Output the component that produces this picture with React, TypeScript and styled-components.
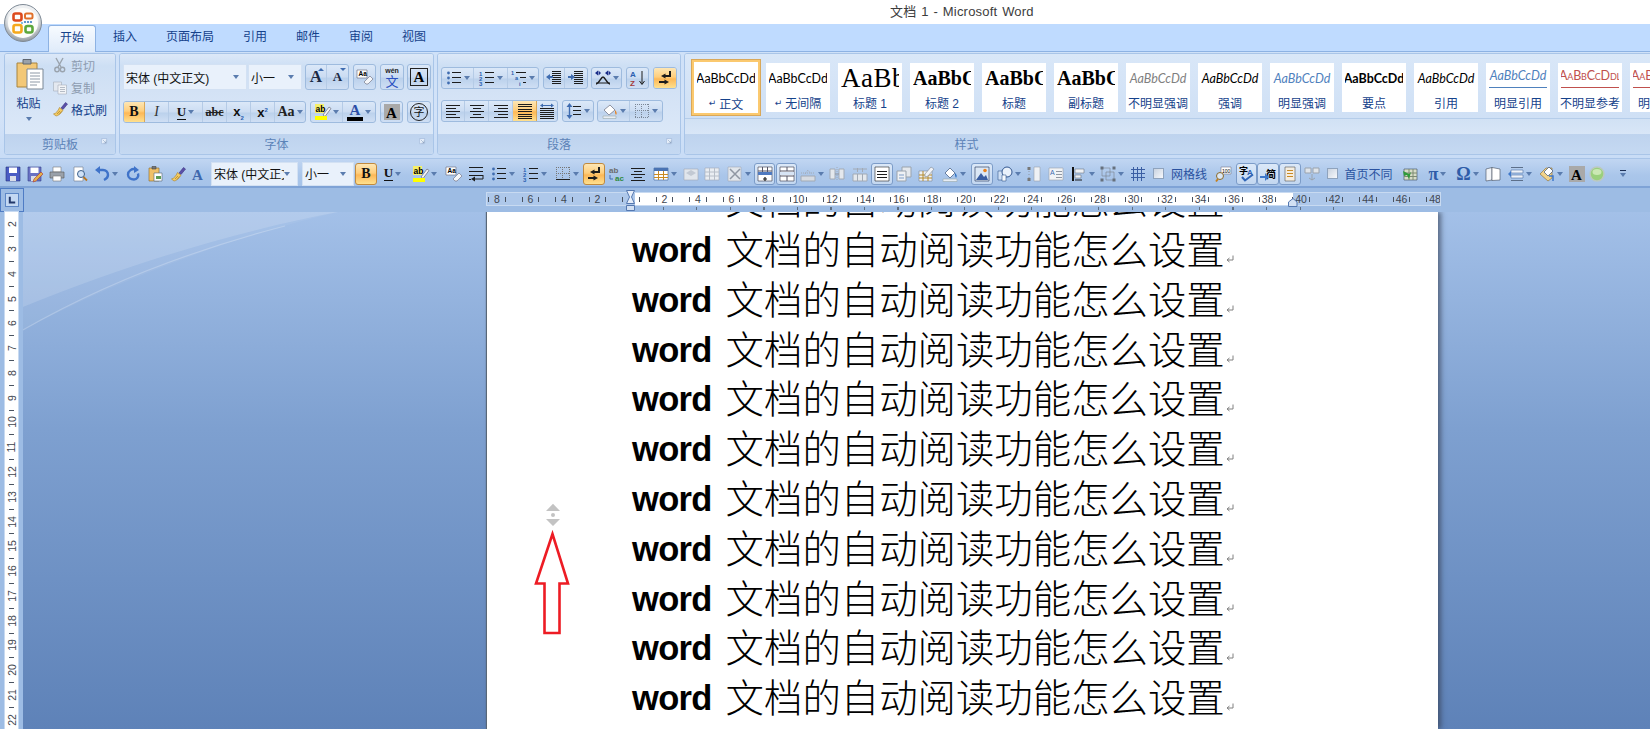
import React from "react";
import styled, { createGlobalStyle } from "styled-components";

const UI = `"Liberation Sans", "Noto Sans CJK SC", sans-serif`;
const SERIF = `"Liberation Serif", "Noto Sans CJK SC", serif`;

const Global = createGlobalStyle`
  html, body { margin: 0; padding: 0; background: #fff; overflow: hidden; }
  body { font-family: ${UI}; font-size: 12px; }
  * { box-sizing: border-box; }
`;

const S = (p: { d: string; c?: string; w?: number }) => (
  <path d={p.d} fill="none" stroke={p.c || "#1c1c1c"} strokeWidth={p.w || 1} />
);
const F = (p: { d: string; c: string; s?: string }) => (
  <path d={p.d} fill={p.c} stroke={p.s || "none"} strokeWidth={0.6} />
);
const T = (p: { x: number; y: number; z: number; c?: string; b?: boolean; i?: boolean; serif?: boolean; children: React.ReactNode }) => (
  <text x={p.x} y={p.y} fontSize={p.z} fill={p.c || "#000"} fontWeight={p.b ? 700 : 400} fontStyle={p.i ? "italic" : "normal"} fontFamily={p.serif ? SERIF : UI}>
    {p.children}
  </text>
);
const lines = (ys: number[], x1: number, x2: number, c = "#1c1c1c") => <S d={ys.map((y) => `M${x1} ${y + 0.5}H${x2}`).join("")} c={c} />;

const G: Record<string, React.ReactNode> = {
  cut: (<><S d="M4 1l5 9M11 1L6 10" c="#9aa3ad" w={1.4} /><circle cx="5" cy="12.5" r="2.2" fill="none" stroke="#9aa3ad" strokeWidth="1.4" /><circle cx="10.5" cy="12.5" r="2.2" fill="none" stroke="#9aa3ad" strokeWidth="1.4" /></>),
  copy: (<><F d="M1.5 3h8v9h-8z" c="#e4e9f0" s="#a5adb8" /><F d="M6 6h8.5v9H6z" c="#f2f4f7" s="#a5adb8" />{lines([8, 10, 12], 8, 13, "#b5bcc6")}</>),
  brush: (<><F d="M9 7l4.5-5.5 2 1.6L11 8.5z" c="#5a4fa8" s="#3c3480" /><F d="M1.5 13C4 12.5 6 10 7.5 6.5l3.5 2.8C9 12.5 6 15 4 15z" c="#f3ca62" s="#a9812a" /><S d="M5 13l3-3M7 13.5l2.5-3" c="#a9812a" w={0.7} /></>),
  bullets: (<><circle cx="2.5" cy="3" r="1.4" fill="#3f6cb0" /><circle cx="2.5" cy="8" r="1.4" fill="#3f6cb0" /><circle cx="2.5" cy="13" r="1.4" fill="#3f6cb0" />{lines([2, 7, 12], 6, 15)}</>),
  numbers: (<><T x={0} y={5.5} z={6} c="#2a5fb0" b>1</T><T x={0} y={10.5} z={6} c="#2a5fb0" b>2</T><T x={0} y={15.5} z={6} c="#2a5fb0" b>3</T>{lines([2, 7, 12], 6, 15)}</>),
  multi: (<><T x={0} y={5} z={5.5} c="#2a5fb0" b>1</T><T x={4} y={10} z={5.5} c="#2a5fb0" b>a</T><T x={8} y={15.5} z={5.5} c="#2a5fb0" b>i</T>{lines([2], 5, 15)}{lines([7], 9, 15)}{lines([12], 12, 15)}</>),
  indentL: (<>{lines([1, 3, 5, 7, 9, 11, 13], 6, 15)}<F d="M0 7l4-3v2h3v2H4v2z" c="#3f6cb0" /></>),
  indentR: (<>{lines([1, 3, 5, 7, 9, 11, 13], 6, 15)}<F d="M7 7L3 4v2H0v2h3v2z" c="#3f6cb0" /></>),
  asian: (<><S d="M1 14c3 0 5-7 7-7s4 7 7 7" w={1.4} /><S d="M1 13h14" /><F d="M0 3l3-2.500v5zM6 3L3.500.5v5z" c="#1b2e8a" /><F d="M10 3l3-2.500v5zM16 3l-2.500-2.500v5z" c="#1b2e8a" /></>),
  sort: (<><T x={0} y={7} z={8} c="#2a5fb0" b>A</T><T x={0} y={15.500} z={8} c="#a33a3a" b>Z</T><S d="M12 1v13M9.500 11l2.500 3.500 2.500-3.500" /></>),
  marks: (<><S d="M13 1v5H7" w={2} /><F d="M8.500 3.500L4 6l4.500 2.500z" c="#1c1c1c" /><S d="M2 12h6" w={2} /><F d="M7.500 9.500L12 12l-4.500 2.500z" c="#1c1c1c" /></>),
  alignL: (<>{lines([2, 8, 14], 1, 15)}{lines([5, 11], 1, 11)}</>),
  alignC: (<>{lines([2, 8, 14], 1, 15)}{lines([5, 11], 4, 12)}</>),
  alignR: (<>{lines([2, 8, 14], 1, 15)}{lines([5, 11], 5, 15)}</>),
  justify: (<>{lines([1, 3, 6, 8, 11, 13], 1, 15)}<S d="M1 15.500h14" /></>),
  distrib: (<>{lines([5, 7, 9, 11, 13, 15], 1, 15)}<S d="M4 2.500h8" c="#3f6cb0" /><F d="M1 2.500L4 .5v4zM15 2.500L12 .5v4z" c="#3f6cb0" /></>),
  spacing: (<>{lines([3, 7, 11], 7, 15)}<S d="M3.500 2v12" c="#3f6cb0" w={1.4} /><F d="M3.500 0l3 4h-6zM3.500 16l3-4h-6z" c="#3f6cb0" /></>),
  bucket: (<><F d="M2 7l6-5 5 5-6 5z" c="#fff" s="#556" /><F d="M13 7c2 2 2 4 1 5-1-1-1-3-1-5z" c="#e8821f" /><F d="M1 13h13v2.500H1z" c="#e8edf4" s="#9aa" /></>),
  borderDots: (<><path d="M1 1.500h14M1 7.500h14M1.500 1v11M7.500 1v11M14.500 1v11" stroke="#777" strokeDasharray="1 1" fill="none" /><S d="M1 13.500h14" c="#222" /></>),
  borderGrey: (<path d="M1 1.500h14M1 7.500h14M1 14.500h14M1.500 1v14M7.500 1v14M14.500 1v14" stroke="#7a8696" strokeDasharray="1 1" fill="none" />),
  launcher: (<><F d="M1 1h8v8H1z" c="#eaf2fc" s="#7e9cc6" /><F d="M3 3l5 5M8 4v4H4" c="none" s="#54739f" /></>),
  save: (<><F d="M1 1h14v14H1z" c="#4a5cc4" s="#27337a" /><F d="M4 1.500h8V7H4z" c="#fff" /><F d="M5 10h6v5H5z" c="#d9dde8" /></>),
  saveAs: (<><F d="M1 1h13v14H1z" c="#6a72c4" s="#33408a" /><F d="M3.500 1.500h8V7h-8z" c="#fff" /><F d="M4 10h6v5H4z" c="#d9dde8" /><F d="M7 13l7-7 2 2-7 7-3 1z" c="#e3b04b" s="#a33" /></>),
  print: (<><F d="M4 1h8v5H4z" c="#fff" s="#777" /><F d="M1 6h14v6H1z" c="#9aa1aa" s="#555" /><F d="M4 10h8v5H4z" c="#fff" s="#777" /></>),
  preview: (<><F d="M2 1h9v14H2z" c="#fff" s="#6f7b8a" /><circle cx="9" cy="8" r="3.500" fill="#cfe1f6" stroke="#3c5f8a" /><S d="M11.500 11l3.500 3.500" c="#b9761f" w={1.8} /></>),
  undo: (<><S d="M4 4h5c3 0 5 2 5 5s-2 4-4 5" c="#3f73c9" w={2.4} /><F d="M6 0v8L1 4z" c="#3f73c9" /></>),
  redo: (<><S d="M11 3.500C7 2 3 5 3 8.500s3 5 6 5 5-3 4-6" c="#3f73c9" w={2.4} /><F d="M9 0v7l5-3z" c="#3f73c9" /></>),
  paste: (<><F d="M2 2h10v13H2z" c="#f0c069" s="#8a6a2a" /><F d="M5 0.500h4V3H5z" c="#777" s="#444" /><F d="M7 7h8v8H7z" c="#fff" s="#567" /><F d="M9 10h5v3H9z" c="#5d9a53" /></>),
  fontA: <T x={2} y={14} z={15} c="#3d67ad" b serif>A</T>,
  clear: (<><F d="M0 1h10v8H0z" c="#fff" s="#667" /><T x={1.500} y={7} z={6.500} b>Aa</T><F d="M7 13l6-6 3 3-5 5H9z" c="#f4f6f9" s="#667" /></>),
  wrapL: (<>{lines([1, 5, 9], 1, 15)}<S d="M15 9v4H6" /><F d="M7 10.500L3 13l4 2.500z" c="#1c1c1c" />{lines([13], 1, 3)}</>),
  swap: (<><T x={1} y={7} z={8} c="#6b6b6b" b>ab</T><T x={7} y={15} z={8} c="#2f8a3d" b>ac</T><S d="M2 9v4h3" c="#3f6cb0" /></>),
  tableC: (<><F d="M1 2h14v12H1z" c="#fff" s="#3a5f94" /><F d="M1 2h14v3H1z" c="#4a73b3" /><path d="M1 8.500h14M1 11.500h14M5.500 5v9M10.500 5v9" stroke="#c98a24" /></>),
  greyA: (<><F d="M1 3h14v11H1z" c="#e1e6ec" s="#a2aab5" /><path d="M3 7l5-3 5 3-5 3z" fill="#c2c9d3" /></>),
  greyT: (<><F d="M1 2h14v12H1z" c="#e9edf2" s="#a2aab5" /><path d="M1 6h14M1 10h14M5.500 2v12M10.500 2v12" stroke="#b7bec8" /></>),
  greyX: (<><F d="M1 1h13v14H1z" c="#e1e6ec" s="#a2aab5" /><S d="M3 3l10 10M13 3L3 13" c="#8f97a3" w={1.5} /></>),
  insRow: (<><F d="M1 1h14v14H1z" c="#fff" s="#334" /><path d="M1 5h14M5.500 1v8M10.500 1v8" stroke="#556" /><F d="M1 6h14v3H1z" c="#4f7ac0" /><S d="M8 11v4M6 13h4" w={1.2} /></>),
  splitT: (<><F d="M1 1h14v14H1z" c="#fff" s="#334" /><path d="M1 5h14M1 10h14M8 1v4M8 10v5" stroke="#556" /><F d="M1 6h14v3H1z" c="#d7e4f5" /></>),
  greyS: (<><path d="M1 10h14v5H1z" fill="#d6dbe2" stroke="#a2aab5" /><path d="M5 8l3-4 3 4M1 7h14" stroke="#a2aab5" fill="none" strokeDasharray="1 1" /></>),
  greyM: (<><path d="M1 3h5v10H1zM10 3h5v10h-5z" fill="#e4e8ed" stroke="#a2aab5" /><path d="M6 8h4" stroke="#8f97a3" /><path d="M8 1v14" stroke="#a2aab5" strokeDasharray="1 1" /></>),
  greyD: (<><path d="M1 8h14v7H1z" fill="#e4e8ed" stroke="#a2aab5" /><path d="M1 3h14M5.500 2v4M10.500 2v4M5.500 8v7M10.500 8v7" stroke="#a2aab5" /></>),
  textDir: (<><F d="M1 1h14v14H1z" c="#fff" s="#222" />{lines([5, 8, 11], 3, 13)}</>),
  greyC: (<><path d="M6 1h9v10H6z" fill="#e4e8ed" stroke="#9aa3ad" /><path d="M1 5h9v10H1z" fill="#eef1f5" stroke="#9aa3ad" /><path d="M3 9h5M3 12h5" stroke="#7f9dc7" /></>),
  editT: (<><F d="M1 5h13v10H1z" c="#eef1f5" s="#7d8794" /><path d="M1 9h13M1 12h13M5 5v10M10 5v10" stroke="#b48a2a" /><F d="M7 8l6-7 3 2-6 7-3 1z" c="#f1f3f6" s="#7d8794" /></>),
  fill: (<><F d="M3 7l5-5 5 5-5 5z" c="#fff" s="#1f3a66" /><F d="M13 7c2 2 2 3 1 5-1-2-1-3-1-5z" c="#2a6ec0" /><F d="M1 13h14v2.500H1z" c="#e8edf4" s="#9aa" /></>),
  pic: (<><F d="M1 1h14v14H1z" c="#dbe7f5" s="#1c2b52" /><path d="M2 14l5-7 3 4 2-2 2 5z" fill="#3a5ea3" /><circle cx="11" cy="4.500" r="1.800" fill="#e8821f" /></>),
  shapes: (<><F d="M1 5h7v9H1z" c="#cfe0f5" s="#33578f" /><circle cx="10" cy="6" r="5" fill="#e9f1fb" stroke="#33578f" /><F d="M5 9h4v6H5z" c="#f6f9fd" s="#33578f" /></>),
  handles: (<><path d="M3 2v12" stroke="#8f97a3" strokeDasharray="1 2" /><F d="M8 1h6v14H8z" c="#eef1f5" s="#9aa3ad" /><F d="M1.500 1h3v3h-3zM1.500 12h3v3h-3z" c="#777" /></>),
  textBox: (<><F d="M1 2h14v12H1z" c="#f1f3f6" s="#9aa3ad" /><T x={2} y={9} z={7} c="#3f6cb0">A</T>{lines([5, 8, 11], 8, 14, "#8f97a3")}</>),
  alignO: (<><path d="M2 1v14" stroke="#111" strokeWidth="2" /><F d="M4 3h9v4H4zM4 9h6v3H4z" c="#eef1f5" s="#6c7785" /><S d="M4 14h7" /></>),
  group: (<><F d="M2 2h8v8H2zM6 6h8v8H6z" c="none" s="#78808c" /><F d="M0.500.5h3v3h-3zM12.500.5h3v3h-3zM0.500 12.500h3v3h-3zM12.500 12.500h3v3h-3z" c="#66707d" /></>),
  grid: <path d="M3.500 1v14M7.500 1v14M11.500 1v14M1 3.500h14M1 7.500h14M1 11.500h14" stroke="#3a5ea3" fill="none" />,
  zoomT: (<><F d="M6 1h10v7H6z" c="#fff" s="#778" /><T x={7} y={6.500} z={5}>100</T><circle cx="5" cy="10" r="3.500" fill="#dbe7f5" stroke="#8a6a2a" /><S d="M3 13l-2 2.500" c="#c6801d" w={2} /></>),
  spell: (<><T x={0} y={8} z={9} b>字</T><T x={8} y={9} z={8} c="#2a5fb0" b>A</T><S d="M3 11l3 3.500 8-6" c="#2f65b7" w={2} /></>),
  trans: (<><T x={6} y={12} z={10} b>简</T><F d="M0 10h5V7l4 4-4 4v-3H0z" c="#3f78c9" /></>),
  pageV: (<><F d="M3 1h10v14H3z" c="#f4ede0" s="#555" />{lines([4, 7, 10], 5, 11, "#c98a24")}</>),
  blocks: (<><path d="M1 2h6v5H1zM9 2h6v5H9z" fill="#dfe4ea" stroke="#9aa3ad" /><path d="M8 8v6M5 12l3 2 3-2" stroke="#9aa3ad" fill="none" /></>),
  excel: (<><F d="M2 3h13v11H2z" c="#d7ddc7" s="#3b4a5c" /><path d="M2 7h13M2 10.500h13M7 3v11M11 3v11" stroke="#7d8a73" /><F d="M1 5l6 3 2-2-2 7-2-4-3 1z" c="#2f9a3a" /></>),
  book: (<><F d="M1 3l6-1.500V14l-6 1z" c="#f1f4f8" s="#40495a" /><F d="M7 1.500l8 1.500v11l-8 .5z" c="#fff" s="#40495a" /></>),
  header: (<><path d="M3 1.500h12M3 14.500h12" stroke="#5c6f8a" /><F d="M3 4h12v3H3zM3 9h12v3H3z" c="#eef3fa" s="#4a6ea5" /><F d="M0 8l3-3v6z" c="#3f78c9" /></>),
  tag: (<><F d="M1 8l6-6h6v10l-4 3z" c="#f2d38a" s="#8a6a2a" /><F d="M5 6l5-5 4 4-5 5z" c="#fff" s="#1f3a66" /><S d="M10 10h4v5" c="#3f78c9" w={1.5} /></>),
  shadeA: (<><path d="M0 0h16v16H0z" fill="#a9a9a9" /><T x={2} y={13.500} z={15} b serif>A</T></>),
  orb: (<><circle cx="8" cy="8" r="7" fill="#9ad07c" stroke="#bcc9c0" strokeWidth="1.500" /><ellipse cx="8" cy="6" rx="4.500" ry="3" fill="#cbe8b4" /></>),
};

const Icon = ({ n, s = 16 }: { n: string; s?: number }) => (
  <IconSvg width={s} height={s} viewBox="0 0 16 16">
    {G[n]}
  </IconSvg>
);

const Ret = () => (
  <RetSvg width="8" height="8" viewBox="0 0 8 8">
    <path d="M7 .5v4.500H1.500M3.500 3L1 5l2.500 2" fill="none" stroke="#808080" strokeWidth="1" />
  </RetSvg>
);

const TABS = ["开始", "插入", "页面布局", "引用", "邮件", "审阅", "视图"];

const STYLES: { label: string; pre?: string; preview: string; kind: string }[] = [
  { label: "正文", pre: "↵", preview: "AaBbCcDd", kind: "plain" },
  { label: "无间隔", pre: "↵", preview: "AaBbCcDd", kind: "plain" },
  { label: "标题 1", preview: "AaBb", kind: "h1" },
  { label: "标题 2", preview: "AaBbC", kind: "h2" },
  { label: "标题", preview: "AaBbC", kind: "h2" },
  { label: "副标题", preview: "AaBbC", kind: "h2" },
  { label: "不明显强调", preview: "AaBbCcDd", kind: "faint" },
  { label: "强调", preview: "AaBbCcDd", kind: "em" },
  { label: "明显强调", preview: "AaBbCcDd", kind: "blueEm" },
  { label: "要点", preview: "AaBbCcDd", kind: "bold" },
  { label: "引用", preview: "AaBbCcDd", kind: "em" },
  { label: "明显引用", preview: "AaBbCcDd", kind: "quote" },
  { label: "不明显参考", preview: "AaBbCcDdl", kind: "ref" },
  { label: "明显参考", preview: "AaBbCcDdl", kind: "ref" },
];

type Q = { w: number; n?: string; caret?: boolean; on?: boolean; box?: boolean; ml?: number; text?: string; check?: boolean; letter?: string };

const QAT: Q[] = [
  { w: 22, n: "save" }, { w: 22, n: "saveAs" }, { w: 22, n: "print" }, { w: 23, n: "preview" },
  { w: 29, n: "undo", caret: true }, { w: 25, n: "redo" }, { w: 20, n: "paste" }, { w: 25, n: "brush" }, { w: 16, n: "fontA" },
];
const QAT2: Q[] = [
  { w: 22, letter: "B", on: true, box: true }, { w: 31, letter: "U", caret: true }, { w: 33, n: "hl", caret: true },
  { w: 26, n: "clear" }, { w: 18, n: "wrapL" }, { w: 35, n: "bullets", caret: true }, { w: 30, n: "numbers", caret: true },
  { w: 33, n: "borderDots", caret: true }, { w: 22, n: "marks", on: true, box: true }, { w: 22, n: "swap" }, { w: 22, n: "alignC" },
  { w: 31, n: "tableC", caret: true }, { w: 21, n: "greyA" }, { w: 22, n: "greyT" }, { w: 31, n: "greyX", caret: true },
  { w: 21, n: "insRow", box: true }, { w: 21, ml: 1, n: "splitT", box: true }, { w: 29, n: "greyS", caret: true },
  { w: 22, n: "greyM" }, { w: 23, n: "greyD" }, { w: 22, n: "textDir", box: true }, { w: 22, n: "greyC" }, { w: 21, n: "editT" },
  { w: 35, n: "fill", caret: true }, { w: 22, n: "pic", box: true }, { w: 32, n: "shapes", caret: true }, { w: 17, n: "handles" },
  { w: 28, n: "textBox" }, { w: 25, n: "alignO", caret: true }, { w: 33, n: "group", caret: true }, { w: 20, n: "grid" },
  { w: 21, check: true }, { w: 40, text: "网格线" }, { w: 27, n: "zoomT" }, { w: 21, n: "spell", box: true }, { w: 22, n: "trans", box: true },
  { w: 22, n: "pageV", box: true }, { w: 22, n: "blocks" }, { w: 18, check: true }, { w: 55, text: "首页不同" }, { w: 28, n: "excel" },
  { w: 27, letter: "π", caret: true }, { w: 33, letter: "Ω", caret: true }, { w: 18, n: "book" }, { w: 35, n: "header", caret: true },
  { w: 27, n: "tag", caret: true }, { w: 26, n: "shadeA" }, { w: 14, n: "orb" },
];

const HL = () => (
  <IconSvg width="16" height="16" viewBox="0 0 16 16">
    <path d="M0 0h9v9H0z" fill="#f5ef6a" />
    <T x={0.5} y={8} z={8.5} b>ab</T>
    <path d="M8 11l6-8 2 1.500-6 8z" fill="#f1f3f6" stroke="#556" strokeWidth="0.6" />
    <path d="M0 12h12v4H0z" fill="#ff0" />
  </IconSvg>
);

const renderQ = (q: Q, i: number) => (
  <QCell key={i} $w={q.w} $ml={q.ml || 0} $on={!!q.on} $box={!!q.box}>
    {q.n === "hl" ? <HL /> : q.n ? <Icon n={q.n} /> : null}
    {q.letter === "B" && <BoldB>B</BoldB>}
    {q.letter === "U" && <UnderU>U</UnderU>}
    {(q.letter === "π" || q.letter === "Ω") && <MathGlyph>{q.letter}</MathGlyph>}
    {q.text && <QText>{q.text}</QText>}
    {q.check && <Check />}
    {q.caret && <Caret />}
  </QCell>
);

const rulerNums = [8, 6, 4, 2, 0, 2, 4, 6, 8, 10, 12, 14, 16, 18, 20, 22, 24, 26, 28, 30, 32, 34, 36, 38, 40, 42, 44, 46, 48];
const vNums = Array.from({ length: 21 }, (_, i) => i + 2);

const App = () => (
  <Root>
    <Global />
    <Orb>
      <svg width="38" height="38" viewBox="0 0 38 38">
        <defs>
          <radialGradient id="rim" cx="50%" cy="35%" r="65%">
            <stop offset="0.6" stopColor="#eef0f2" />
            <stop offset="1" stopColor="#8c949c" />
          </radialGradient>
        </defs>
        <circle cx="19" cy="19" r="18.500" fill="url(#rim)" stroke="#7f8a96" />
        <circle cx="19" cy="19" r="15" fill="#fdfdfb" />
        <rect x="9.500" y="9.500" width="8" height="7" rx="2" fill="none" stroke="#dd4a1c" strokeWidth="2.600" />
        <rect x="9.500" y="21" width="8" height="7.500" rx="2" fill="none" stroke="#f5a81c" strokeWidth="2.600" />
        <rect x="21" y="9.500" width="7.500" height="5" rx="1.500" fill="none" stroke="#e0702a" strokeWidth="2" />
        <rect x="21.500" y="22" width="7" height="6.500" rx="2" fill="none" stroke="#5ca83c" strokeWidth="2.600" />
        <circle cx="21" cy="18" r="1.100" fill="#3a7ec2" />
        <circle cx="24" cy="18" r="1.100" fill="#3a7ec2" />
        <circle cx="27" cy="18" r="1.100" fill="#3a7ec2" />
        <circle cx="18" cy="19" r="1.100" fill="#6cb0d8" />
      </svg>
    </Orb>

    <TitleBar>文档 1 - Microsoft Word</TitleBar>

    <TabStrip>
      {TABS.map((t, i) => (
        <Tab key={t} $on={i === 0}>
          {t}
        </Tab>
      ))}
    </TabStrip>

    <Ribbon>
      <Group $w={112}>
        <GroupBody $pl={0}>
          <ClipCol>
            <PasteBig>
              <svg width="28" height="32" viewBox="0 0 28 32">
                <path d="M1 5h20v24H1z" fill="#f3c877" stroke="#a8843f" />
                <path d="M7 1.500h8V6H7z" fill="#9aa1aa" stroke="#5f6670" />
                <path d="M11 11h16v20H11z" fill="#fff" stroke="#7b8795" />
                <path d="M14 15h10M14 18h10M14 21h10M14 24h10M14 27h7" stroke="#8e99a6" />
              </svg>
            </PasteBig>
            <PasteLabel>粘贴</PasteLabel>
            <Caret />
          </ClipCol>
          <ClipRows>
            <ClipRow $dim>
              <Icon n="cut" />
              剪切
            </ClipRow>
            <ClipRow $dim>
              <Icon n="copy" />
              复制
            </ClipRow>
            <ClipRow>
              <Icon n="brush" />
              格式刷
            </ClipRow>
          </ClipRows>
        </GroupBody>
        <GroupLabel>
          剪贴板
          <Launcher>
            <Icon n="launcher" s={10} />
          </Launcher>
        </GroupLabel>
      </Group>

      <Group $w={315}>
        <GroupBody $pl={3} $col>
          <Row $h={26} $top={10}>
            <Combo $w={124}>
              宋体 (中文正文)
              <Caret />
            </Combo>
            <Combo $w={54} $ml={1}>
              小一
              <Caret />
            </Combo>
            <BtnGroup $ml={3}>
              <Btn $w={21}>
                <GrowA $z={17}>A</GrowA>
                <Up />
              </Btn>
              <Btn $w={21}>
                <GrowA $z={13}>A</GrowA>
                <Down />
              </Btn>
            </BtnGroup>
            <BtnGroup $ml={4}>
              <Btn $w={21}>
                <Icon n="clear" />
              </Btn>
            </BtnGroup>
            <BtnGroup $ml={4}>
              <Btn $w={22}>
                <WenBox>
                  <small>wén</small>
                  <b>文</b>
                </WenBox>
              </Btn>
            </BtnGroup>
            <BtnGroup $ml={3}>
              <Btn $w={22}>
                <FramedA>A</FramedA>
              </Btn>
            </BtnGroup>
          </Row>
          <Row $h={22} $top={11}>
            <BtnGroup>
              <Btn $w={21} $on>
                <BoldB>B</BoldB>
              </Btn>
              <Btn $w={24}>
                <ItalicI>I</ItalicI>
              </Btn>
              <Btn $w={34}>
                <UnderU>U</UnderU>
                <Caret />
              </Btn>
              <Btn $w={24}>
                <StrikeAbc>abc</StrikeAbc>
              </Btn>
              <Btn $w={24}>
                <ScriptX>
                  x<sub>2</sub>
                </ScriptX>
              </Btn>
              <Btn $w={24}>
                <ScriptX>
                  x<sup>2</sup>
                </ScriptX>
              </Btn>
              <Btn $w={30}>
                <CaseAa>Aa</CaseAa>
                <Caret />
              </Btn>
            </BtnGroup>
            <BtnGroup $ml={4}>
              <Btn $w={32}>
                <HL />
                <Caret />
              </Btn>
              <Btn $w={32}>
                <ColorA>A</ColorA>
                <Caret />
              </Btn>
            </BtnGroup>
            <BtnGroup $ml={4}>
              <Btn $w={21}>
                <Icon n="shadeA" />
              </Btn>
            </BtnGroup>
            <BtnGroup $ml={4}>
              <Btn $w={22}>
                <CircleZi>字</CircleZi>
              </Btn>
            </BtnGroup>
          </Row>
        </GroupBody>
        <GroupLabel>
          字体
          <Launcher>
            <Icon n="launcher" s={10} />
          </Launcher>
        </GroupLabel>
      </Group>

      <Group $w={244}>
        <GroupBody $pl={3} $col>
          <Row $h={22} $top={13}>
            <BtnGroup>
              <Btn $w={32}>
                <Icon n="bullets" />
                <Caret />
              </Btn>
              <Btn $w={34}>
                <Icon n="numbers" />
                <Caret />
              </Btn>
              <Btn $w={30}>
                <Icon n="multi" />
                <Caret />
              </Btn>
            </BtnGroup>
            <BtnGroup $ml={4}>
              <Btn $w={21}>
                <Icon n="indentL" />
              </Btn>
              <Btn $w={22}>
                <Icon n="indentR" />
              </Btn>
            </BtnGroup>
            <BtnGroup $ml={3}>
              <Btn $w={29}>
                <Icon n="asian" />
                <Caret />
              </Btn>
            </BtnGroup>
            <BtnGroup $ml={4}>
              <Btn $w={21}>
                <Icon n="sort" />
              </Btn>
            </BtnGroup>
            <BtnGroup $ml={4}>
              <Btn $w={22} $on>
                <Icon n="marks" />
              </Btn>
            </BtnGroup>
          </Row>
          <Row $h={22} $top={11}>
            <BtnGroup>
              <Btn $w={23}>
                <Icon n="alignL" />
              </Btn>
              <Btn $w={24}>
                <Icon n="alignC" />
              </Btn>
              <Btn $w={24}>
                <Icon n="alignR" />
              </Btn>
              <Btn $w={24} $on>
                <Icon n="justify" />
              </Btn>
              <Btn $w={20}>
                <Icon n="distrib" />
              </Btn>
            </BtnGroup>
            <BtnGroup $ml={4}>
              <Btn $w={30}>
                <Icon n="spacing" />
                <Caret />
              </Btn>
            </BtnGroup>
            <BtnGroup $ml={3}>
              <Btn $w={32}>
                <Icon n="bucket" />
                <Caret />
              </Btn>
              <Btn $w={32}>
                <Icon n="borderGrey" />
                <Caret />
              </Btn>
            </BtnGroup>
          </Row>
        </GroupBody>
        <GroupLabel>
          段落
          <Launcher>
            <Icon n="launcher" s={10} />
          </Launcher>
        </GroupLabel>
      </Group>

      <Group $w={1100}>
        <GalleryBand>
          {STYLES.map((s, i) => (
            <StyleItem key={s.label} $on={i === 0}>
              <Preview $kind={s.kind}>{s.preview}</Preview>
              <StyleName>
                {s.pre && <PreMark>{s.pre}</PreMark>}
                {s.label}
              </StyleName>
            </StyleItem>
          ))}
        </GalleryBand>
        <GalleryFoot />
        <GroupLabel $pr={535}>样式</GroupLabel>
      </Group>
    </Ribbon>

    <Qat>
      {QAT.map(renderQ)}
      <Combo $w={87} $ml={5} $h={24}>
        <ClipText>宋体 (中文正文)</ClipText>
        <Caret />
      </Combo>
      <Combo $w={52} $ml={4} $h={24}>
        小一
        <Caret />
      </Combo>
      <QGap />
      {QAT2.map(renderQ)}
      <Overflow>
        <i />
        <Caret />
      </Overflow>
    </Qat>

    <RulerBand>
      <Corner>
        <CornerInner>
          <svg width="10" height="10" viewBox="0 0 10 10">
            <path d="M1 1h2.500v6H9v2.500H1z" fill="#22386b" />
          </svg>
        </CornerInner>
      </Corner>
      <RulerWrap>
        <RulerTrack>
          <RulerCells>
            {rulerNums.map((n, i) => (
              <RulerCell key={i}>
                <RTick />
                <RNum>{n === 0 ? "" : n}</RNum>
                <RTick />
              </RulerCell>
            ))}
          </RulerCells>
          <Hourglass>
            <svg width="10" height="22" viewBox="0 0 10 22">
              <path d="M.5.5h8L5.500 7l3 6.500h-8L3.500 7z" fill="#e6eefa" stroke="#5578b0" />
              <path d="M.5 15.500h8v5h-8z" fill="#d2e0f3" stroke="#5578b0" />
            </svg>
          </Hourglass>
          <RightIndent>
            <svg width="10" height="9" viewBox="0 0 10 9">
              <path d="M.5 8.500V4L5 .5 9 4v4.500z" fill="#d2e0f3" stroke="#5578b0" />
            </svg>
          </RightIndent>
        </RulerTrack>
        <TabStops />
      </RulerWrap>
    </RulerBand>

    <Body>
      <VRail>
        <VTrack>
          {vNums.map((n) => (
            <React.Fragment key={n}>
              <VNum>
                <span>{n}</span>
              </VNum>
              <VTickRow>
                <i />
              </VTickRow>
            </React.Fragment>
          ))}
        </VTrack>
      </VRail>
      <Workspace>
        <Swoosh width="330" height="130" viewBox="0 0 330 130">
          <path d="M0 95C110 50 220 18 315 0H0z" fill="#fff" opacity="0.18" />
          <path d="M0 95C110 50 220 18 315 0C220 22 100 65 0 118z" fill="#fff" opacity="0.05" />
          <path d="M0 118C80 72 170 38 262 14" fill="none" stroke="#fff" strokeWidth="1.2" opacity="0.22" />
        </Swoosh>
        <Page>
          <Lines>
            {Array.from({ length: 11 }, (_, i) => (
              <Line key={i}>
                <Word>word</Word>
                <Zh>文档的自动阅读功能怎么设置</Zh>
                <Ret />
              </Line>
            ))}
          </Lines>
          <Annot width="38" height="134" viewBox="0 0 38 134">
            <path d="M20 .7L13 8h14zM13 16h14l-7 7z" fill="#c3c3c3" />
            <circle cx="20" cy="12" r="2" fill="#c3c3c3" />
            <path d="M19.500 31L3 80.500h8.500V130h15V80.500H35z" fill="none" stroke="#ed1c24" strokeWidth="2.600" />
          </Annot>
        </Page>
      </Workspace>
    </Body>
  </Root>
);

const Root = styled.div`
  position: relative;
  width: 1650px;
  height: 729px;
  overflow: hidden;
  display: flex;
  flex-direction: column;
  background: #fff;
`;
const IconSvg = styled.svg`
  flex: none;
  display: block;
  overflow: visible;
`;
const RetSvg = styled.svg`
  margin-left: 1px;
  margin-bottom: 7px;
`;
const Orb = styled.div`
  position: absolute;
  left: 4px;
  top: 4px;
  z-index: 5;
  height: 38px;
`;
const TitleBar = styled.div`
  height: 24px;
  flex: none;
  padding-left: 890px;
  line-height: 24px;
  font-size: 13px;
  letter-spacing: 0.2px;
  word-spacing: 1px;
  color: #3c3c3c;
`;
const TabStrip = styled.div`
  height: 27px;
  flex: none;
  display: flex;
  gap: 5px;
  padding-left: 48px;
  background: #bfdbff;
`;
const Tab = styled.div<{ $on: boolean }>`
  padding: 0 12px;
  height: ${(p) => (p.$on ? "27px" : "26px")};
  line-height: 25px;
  font-size: 12px;
  color: #15428b;
  position: relative;
  z-index: 1;
  margin-top: 1px;
  ${(p) =>
    p.$on &&
    `
    background: linear-gradient(#f7fbff, #dfebfa);
    border: 1px solid #8db2e3;
    border-bottom: none;
    border-radius: 3px 3px 0 0;
    padding: 0 11px;
  `}
`;
const Ribbon = styled.div`
  height: 107px;
  flex: none;
  display: flex;
  gap: 3px;
  padding: 1px 0 0 4px;
  border-top: 1px solid #8db2e3;
  background: linear-gradient(#cfe1f8, #d3e3f8 60%, #c8dcf6);
  overflow: hidden;
`;
const Group = styled.div<{ $w: number }>`
  width: ${(p) => p.$w}px;
  flex: none;
  height: 102px;
  display: flex;
  flex-direction: column;
  border: 1px solid #a9c5e8;
  border-radius: 3px;
  overflow: hidden;
  background: #dbe8f8;
`;
const GroupBody = styled.div<{ $pl: number; $col?: boolean }>`
  flex: 1;
  display: flex;
  flex-direction: ${(p) => (p.$col ? "column" : "row")};
  padding-left: ${(p) => p.$pl}px;
  background: linear-gradient(#dce8f8, #cddff4 15%, #d3e2f5 45%, #dbe8f8);
`;
const GroupLabel = styled.div<{ $pr?: number }>`
  position: relative;
  height: 20px;
  flex: none;
  text-align: center;
  padding-right: ${(p) => p.$pr || 0}px;
  line-height: 22px;
  font-size: 12px;
  color: #5c83b8;
  background: linear-gradient(#bed3ee, #c5d9f2);
`;
const Launcher = styled.span`
  position: absolute;
  right: 4px;
  top: 4px;
`;
const ClipCol = styled.div`
  width: 47px;
  flex: none;
  display: flex;
  flex-direction: column;
  align-items: center;
  padding-top: 4px;
`;
const PasteBig = styled.div`
  height: 33px;
  margin-left: 2px;
`;
const PasteLabel = styled.div`
  margin-top: 3px;
  margin-bottom: 6px;
  font-size: 12px;
  color: #15428b;
`;
const ClipRows = styled.div`
  display: flex;
  flex-direction: column;
`;
const ClipRow = styled.div<{ $dim?: boolean }>`
  height: 22px;
  display: flex;
  align-items: center;
  gap: 3px;
  font-size: 12px;
  color: ${(p) => (p.$dim ? "#8d9cb0" : "#15428b")};
`;
const Row = styled.div<{ $h: number; $top: number }>`
  display: flex;
  height: ${(p) => p.$h}px;
  margin-top: ${(p) => p.$top}px;
`;
const Caret = styled.span`
  flex: none;
  width: 0;
  height: 0;
  border-left: 3.5px solid transparent;
  border-right: 3.5px solid transparent;
  border-top: 4px solid #5a7cae;
`;
const Combo = styled.div<{ $w: number; $ml?: number; $h?: number }>`
  width: ${(p) => p.$w}px;
  height: ${(p) => p.$h || 26}px;
  margin-left: ${(p) => p.$ml || 0}px;
  flex: none;
  display: flex;
  align-items: center;
  justify-content: space-between;
  padding: 0 7px 0 2px;
  background: #e9f1fb;
  border: 1px solid #d3e1f3;
  font-size: 12px;
  color: #111;
  white-space: nowrap;
`;
const ClipText = styled.span`
  width: 72px;
  overflow: hidden;
`;
const BtnGroup = styled.div<{ $ml?: number }>`
  display: flex;
  flex: none;
  margin-left: ${(p) => p.$ml || 0}px;
  border: 1px solid #9ebbde;
  border-radius: 3px;
  overflow: hidden;
  background: linear-gradient(#dbe8f8, #cbdcf2 50%, #bbd1ec 55%, #cfdff4);
`;
const Btn = styled.div<{ $w: number; $on?: boolean }>`
  position: relative;
  width: ${(p) => p.$w}px;
  flex: none;
  display: flex;
  align-items: center;
  justify-content: center;
  gap: 2px;
  border-right: 1px solid #b5cbe6;
  &:last-child {
    border-right: none;
  }
  ${(p) => p.$on && `background: linear-gradient(#fde6b4, #ffce7c 45%, #fdb857 55%, #fee08f); border-right-color: #d9a85a;`}
`;
const GrowA = styled.span<{ $z: number }>`
  font-family: ${SERIF};
  font-weight: 700;
  font-size: ${(p) => p.$z}px;
  color: #1c2a44;
`;
const Up = styled.span`
  position: absolute;
  right: 2px;
  top: 3px;
  border-left: 3px solid transparent;
  border-right: 3px solid transparent;
  border-bottom: 3px solid #3f6cb0;
`;
const Down = styled(Up)`
  border-bottom: none;
  border-top: 3px solid #3f6cb0;
`;
const WenBox = styled.div`
  display: flex;
  flex-direction: column;
  align-items: center;
  line-height: 8px;
  small {
    font-size: 7px;
    font-weight: 700;
    color: #222;
  }
  b {
    font-weight: 400;
    font-size: 13px;
    line-height: 13px;
    color: #2a4fc0;
  }
`;
const FramedA = styled.span`
  width: 18px;
  height: 18px;
  line-height: 16px;
  text-align: center;
  border: 1px solid #222;
  font-family: ${SERIF};
  font-weight: 700;
  font-size: 15px;
`;
const BoldB = styled.span`
  font-family: ${SERIF};
  font-weight: 700;
  font-size: 14px;
  color: #111;
`;
const ItalicI = styled.span`
  font-family: ${SERIF};
  font-style: italic;
  font-size: 14px;
  color: #333;
`;
const UnderU = styled.span`
  font-family: ${SERIF};
  font-weight: 700;
  font-size: 13px;
  line-height: 14px;
  color: #111;
  border-bottom: 1.500px solid #111;
`;
const StrikeAbc = styled.span`
  font-family: ${SERIF};
  font-weight: 700;
  font-size: 12px;
  color: #222;
  text-decoration: line-through;
`;
const ScriptX = styled.span`
  font-weight: 700;
  font-size: 13px;
  color: #111;
  sub,
  sup {
    font-size: 6px;
    color: #2a5fb0;
  }
`;
const CaseAa = styled.span`
  font-family: ${SERIF};
  font-weight: 700;
  font-size: 14px;
  color: #222;
`;
const ColorA = styled.span`
  width: 16px;
  text-align: center;
  font-family: ${SERIF};
  font-weight: 700;
  font-size: 15px;
  line-height: 14px;
  color: #2c4ea6;
  border-bottom: 4px solid #000;
`;
const CircleZi = styled.span`
  width: 18px;
  height: 18px;
  border-radius: 50%;
  border: 1px solid #222;
  font-size: 11px;
  line-height: 16px;
  text-align: center;
  color: #111;
`;
const GalleryBand = styled.div`
  height: 64px;
  flex: none;
  display: flex;
  gap: 8px;
  padding: 9px 0 0 6px;
  background: linear-gradient(#d9e7f8, #cfe0f5);
`;
const StyleItem = styled.div<{ $on: boolean }>`
  width: ${(p) => (p.$on ? 70 : 64)}px;
  height: ${(p) => (p.$on ? 57 : 49)}px;
  flex: none;
  display: flex;
  flex-direction: column;
  align-items: center;
  background: #fff;
  overflow: hidden;
  ${(p) =>
    p.$on &&
    `
    margin: -4px -3px 0 0;
    border: 3px solid #fbc96f;
    outline: 1px solid #d9a85a;
    outline-offset: -1px;
    padding-top: 1px;
  `}
`;
const kindCss: Record<string, string> = {
  plain: `color: #000;`,
  h1: `font-family: ${SERIF}; font-size: 27px; color: #000; letter-spacing: .5px;`,
  h2: `font-family: ${SERIF}; font-weight: 700; font-size: 20px; color: #000;`,
  faint: `font-style: italic; color: #808080;`,
  em: `font-style: italic; color: #000;`,
  blueEm: `font-style: italic; color: #4f81bd;`,
  bold: `font-weight: 700; color: #000;`,
  quote: `font-style: italic; color: #4f81bd; border-bottom: 1px solid #4f81bd;`,
  ref: `font-variant: small-caps; color: #c0504d; border-bottom: 1px solid #c0504d; letter-spacing: -.2px;`,
};
const Preview = styled.div<{ $kind: string }>`
  width: 58px;
  height: 30px;
  flex: none;
  display: flex;
  align-items: center;
  justify-content: center;
  overflow: hidden;
  white-space: nowrap;
  font-family: Lato, ${UI};
  font-size: 12.500px;
  ${(p) => kindCss[p.$kind]}
  ${(p) => (p.$kind === "quote" || p.$kind === "ref") && `height: 25px; margin-bottom: 5px;`}
  ${(p) => (p.$kind === "h1" || p.$kind === "h2") && `justify-content: flex-start;`}
`;
const StyleName = styled.div`
  flex: 1;
  display: flex;
  align-items: center;
  gap: 3px;
  padding-bottom: 0;
  font-size: 12px;
  color: #15428b;
  white-space: nowrap;
`;
const PreMark = styled.span`
  font-size: 9px;
  font-family: "DejaVu Sans", sans-serif;
`;
const GalleryFoot = styled.div`
  flex: 1;
  border-top: 1px solid #b5cdea;
  background: linear-gradient(#d1e1f4, #d8e6f7);
`;
const Qat = styled.div`
  height: 30px;
  flex: none;
  display: flex;
  align-items: center;
  padding: 2px 0 0 2px;
  background: linear-gradient(#c1d6f2, #aac6ea 60%, #a6c3e9);
  border-top: 1px solid #a8c4e8;
  border-bottom: 2px solid #7fa3d6;
  overflow: hidden;
`;
const QGap = styled.span`
  width: 1px;
  flex: none;
`;
const QCell = styled.div<{ $w: number; $ml: number; $on: boolean; $box: boolean }>`
  width: ${(p) => p.$w}px;
  margin-left: ${(p) => p.$ml}px;
  height: ${(p) => (p.$box ? 22 : 20)}px;
  flex: none;
  display: flex;
  align-items: center;
  justify-content: center;
  gap: 2px;
  ${(p) =>
    p.$box &&
    `
    border: 1px solid #7c9cc8;
    border-radius: 3px;
    background: linear-gradient(#dbe8f8, #c3d7f0);
  `}
  ${(p) => p.$on && `border-color: #c18a3e; background: linear-gradient(#fde6b4, #ffce7c 45%, #fdb857 55%, #fee08f);`}
`;
const MathGlyph = styled.span`
  font-family: ${SERIF};
  font-weight: 700;
  font-size: 18px;
  line-height: 18px;
  color: #2f5ca8;
`;
const QText = styled.span`
  font-size: 12px;
  color: #2a52a0;
  white-space: nowrap;
`;
const Check = styled.span`
  width: 11px;
  height: 11px;
  border: 1px solid #8fa3bd;
  background: linear-gradient(135deg, #c9d3e0, #f6f8fb);
`;
const Overflow = styled.div`
  margin-left: 16px;
  display: flex;
  flex-direction: column;
  align-items: center;
  gap: 2px;
  i {
    width: 6px;
    height: 1px;
    background: #1d2f55;
  }
`;
const RulerBand = styled.div`
  height: 24px;
  flex: none;
  display: flex;
  background: #9dbce4;
`;
const Corner = styled.div`
  width: 24px;
  height: 24px;
  flex: none;
  display: flex;
  align-items: center;
  justify-content: center;
  border: 1px solid #4f7cc4;
`;
const CornerInner = styled.div`
  width: 14px;
  height: 14px;
  display: flex;
  align-items: center;
  justify-content: center;
  background: #c3d8f3;
  border: 1px solid #5d87c6;
  svg {
    width: 8px;
    height: 8px;
  }
`;
const RulerWrap = styled.div`
  margin-left: 463px;
  padding-top: 5px;
`;
const RulerTrack = styled.div`
  position: relative;
  width: 953px;
  height: 12px;
  background: linear-gradient(to right, #aec8ea 0 148px, #fff 148px 806px, #aec8ea 806px);
  box-shadow: 0 0 0 1px #c8daf1;
`;
const RulerCells = styled.div`
  display: flex;
  height: 100%;
  overflow: hidden;
  & > :first-child {
    margin-left: -6.750px;
  }
`;
const RulerCell = styled.div`
  width: 33.500px;
  flex: none;
  display: flex;
  align-items: center;
  justify-content: center;
  gap: 3.400px;
`;
const RTick = styled.i`
  width: 1px;
  height: 5px;
  flex: none;
  background: #4a5361;
`;
const RNum = styled.span`
  width: 9px;
  display: flex;
  justify-content: center;
  font-size: 10.500px;
  line-height: 12px;
  color: #3f4650;
`;
const Hourglass = styled.div`
  position: absolute;
  left: 139px;
  top: -3px;
`;
const RightIndent = styled.div`
  position: absolute;
  left: 801px;
  top: 3px;
`;
const TabStops = styled.div`
  width: 700px;
  height: 3px;
  margin: 2px 0 0 176px;
  background: repeating-linear-gradient(to right, #5f7084 0 1px, transparent 1px 33.500px);
`;
const Body = styled.div`
  flex: 1;
  min-height: 0;
  display: flex;
`;
const VRail = styled.div`
  width: 23px;
  flex: none;
  padding-left: 5px;
  background: #9dbce4;
`;
const VTrack = styled.div`
  width: 13px;
  height: 100%;
  padding-top: 6px;
  background: #fff;
  overflow: hidden;
  box-shadow: 0 0 0 1px #c8daf1;
`;
const VNum = styled.div`
  height: 12.400px;
  display: flex;
  align-items: center;
  justify-content: center;
  span {
    display: block;
    font-size: 10.500px;
    line-height: 12px;
    color: #3f4650;
    transform: rotate(-90deg);
    white-space: nowrap;
  }
`;
const VTickRow = styled.div`
  height: 12.400px;
  display: flex;
  align-items: center;
  justify-content: center;
  i {
    width: 5px;
    height: 1px;
    background: #4a5361;
  }
`;
const Workspace = styled.div`
  flex: 1;
  position: relative;
  display: flex;
  padding-left: 464px;
  background: linear-gradient(#a3c0e8, #7ea0d0 42%, #5e82b8);
  overflow: hidden;
`;
const Swoosh = styled.svg`
  position: absolute;
  left: 0;
  top: 0;
`;
const Page = styled.div`
  position: relative;
  width: 951px;
  height: 100%;
  flex: none;
  background: #fff;
  overflow: hidden;
  box-shadow: 3px 0 5px rgba(50, 60, 80, 0.65), -1px 0 1px #5d6a7a;
  padding-left: 145px;
`;
const Lines = styled.div`
  margin-top: -41.500px;
`;
const Line = styled.div`
  height: 49.800px;
  display: flex;
  align-items: flex-end;
  white-space: nowrap;
`;
const Word = styled.span`
  font-family: "Liberation Sans", sans-serif;
  font-weight: 700;
  font-size: 34.500px;
  letter-spacing: -0.7px;
  line-height: 44px;
  margin-right: 14px;
  margin-bottom: -2px;
  color: #000;
`;
const Zh = styled.span`
  font-family: "Noto Sans CJK SC", sans-serif;
  font-weight: 300;
  font-size: 38.400px;
  line-height: 46px;
  color: #000;
`;
const Annot = styled.svg`
  position: absolute;
  left: 46px;
  top: 291px;
`;

export default App;
